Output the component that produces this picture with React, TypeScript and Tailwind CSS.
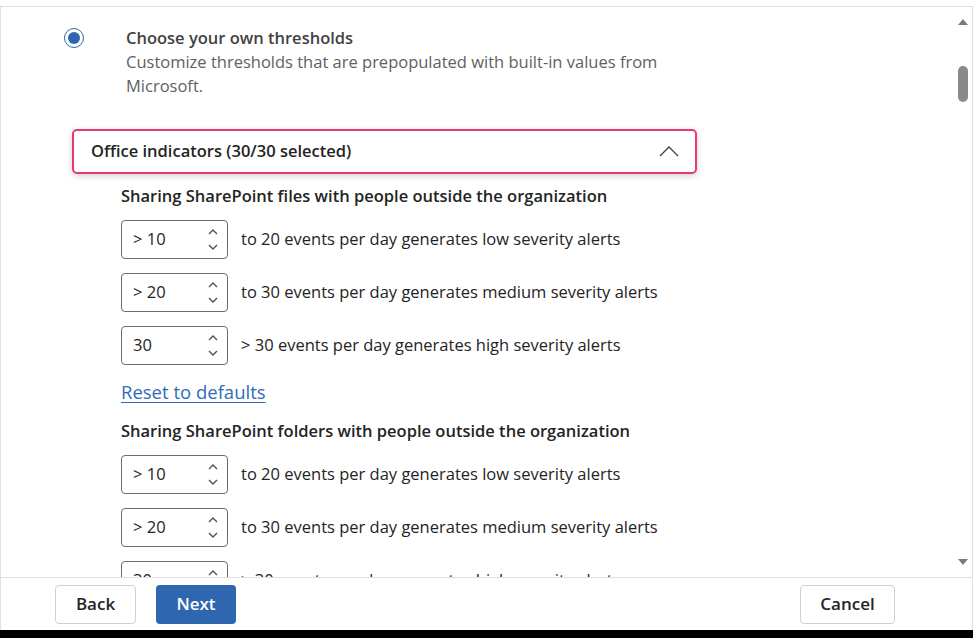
import React from "react";

const font = { fontFamily: '"Open Sans", "Noto Sans", Arial, sans-serif' };

function Spinner() {
  return (
    <div className="flex flex-col items-center gap-[9px] text-[#505050]">
      <svg width="10" height="6" viewBox="0 0 10 6" fill="none">
        <path d="M1 5L5 1L9 5" stroke="currentColor" strokeWidth="1.4" />
      </svg>
      <svg width="10" height="6" viewBox="0 0 10 6" fill="none">
        <path d="M1 1L5 5L9 1" stroke="currentColor" strokeWidth="1.4" />
      </svg>
    </div>
  );
}

function ThresholdRow({ value, label }: { value: string; label: string }) {
  return (
    <div className="flex items-center gap-[13px]">
      <div className="flex h-[39px] w-[107px] items-center justify-between rounded-[4px] border border-[#6e6e6e] pl-[11px] pr-[9px]">
        <span className="text-[16.5px] text-[#242424]">{value}</span>
        <Spinner />
      </div>
      <span className="text-[16.5px] text-[#242424]">{label}</span>
    </div>
  );
}

function IndicatorGroup({ title }: { title: string }) {
  return (
    <div className="flex flex-col">
      <div className="text-[16.5px] font-semibold leading-[24px] text-[#242424]">{title}</div>
      <div className="mt-[12px] flex flex-col gap-[14px]">
        <ThresholdRow value="> 10" label="to 20 events per day generates low severity alerts" />
        <ThresholdRow value="> 20" label="to 30 events per day generates medium severity alerts" />
        <ThresholdRow value="30" label="> 30 events per day generates high severity alerts" />
      </div>
    </div>
  );
}

function Scrollbar() {
  return (
    <div className="flex w-[18px] flex-col items-center justify-between pb-[12px] pt-[12px]">
      <div className="flex flex-col items-center">
        <svg width="10" height="6" viewBox="0 0 10 6">
          <path d="M0 6L5 0L10 6Z" fill="#7a7a7a" />
        </svg>
        <div className="mt-[41px] h-[36px] w-[10px] rounded-full bg-[#8a8a8a]" />
      </div>
      <svg width="10" height="6" viewBox="0 0 10 6">
        <path d="M0 0L5 6L10 0Z" fill="#7a7a7a" />
      </svg>
    </div>
  );
}

export default function App() {
  return (
    <div className="flex h-[638px] w-[973px] flex-col bg-black" style={font}>
      <div className="flex h-[630px] flex-col bg-white pt-[6px]">
        <div className="flex min-h-0 flex-1 border-l border-r border-t border-[#e0e0e0]">
          <div className="min-h-0 flex-1 overflow-hidden pl-[63px] pt-[19px]">
            <div className="flex gap-[42px]">
              <div className="mt-[2px] flex h-[20px] w-[20px] items-center justify-center rounded-full border-[1.5px] border-[#2e67b0]">
                <div className="h-[12px] w-[12px] rounded-full bg-[#2e67b0]" />
              </div>
              <div className="w-[560px]">
                <div className="text-[16.5px] font-semibold leading-[24px] text-[#424242]">
                  Choose your own thresholds
                </div>
                <div className="text-[16.5px] leading-[24px] text-[#616161]">
                  Customize thresholds that are prepopulated with built-in values from Microsoft.
                </div>
              </div>
            </div>

            <div className="ml-[8px] mt-[31px] flex h-[45px] w-[625px] items-center justify-between rounded-[5px] border-[2.5px] border-[#ea3a6a] pl-[17px] pr-[16px] shadow-[0_2px_6px_rgba(0,0,0,0.18)]">
              <span className="text-[16.5px] font-semibold text-[#242424]">Office indicators (30/30 selected)</span>
              <svg width="20" height="11" viewBox="0 0 20 11" fill="none">
                <path d="M1 10L10 1L19 10" stroke="#424242" strokeWidth="1.3" />
              </svg>
            </div>

            <div className="ml-[57px] mt-[10px] flex flex-col">
              <IndicatorGroup title="Sharing SharePoint files with people outside the organization" />
              <a className="mt-[15px] self-start text-[18.5px] leading-[24px] text-[#2f6db5] underline underline-offset-[3px]">
                Reset to defaults
              </a>
              <div className="mt-[15px]">
                <IndicatorGroup title="Sharing SharePoint folders with people outside the organization" />
              </div>
            </div>
          </div>
          <Scrollbar />
        </div>
        <div className="flex h-[53px] items-center justify-between border-l border-r border-t border-[#e0e0e0] pl-[54px] pr-[77px]">
          <div className="flex gap-[20px]">
            <button className="h-[39px] w-[81px] rounded-[4px] border border-[#d1d1d1] bg-white text-[17px] font-semibold text-[#242424]">
              Back
            </button>
            <button className="h-[39px] w-[80px] rounded-[4px] bg-[#2e67b0] text-[17px] font-semibold text-white">
              Next
            </button>
          </div>
          <button className="h-[39px] w-[95px] rounded-[4px] border border-[#d1d1d1] bg-white text-[17px] font-semibold text-[#242424]">
            Cancel
          </button>
        </div>
      </div>
    </div>
  );
}
